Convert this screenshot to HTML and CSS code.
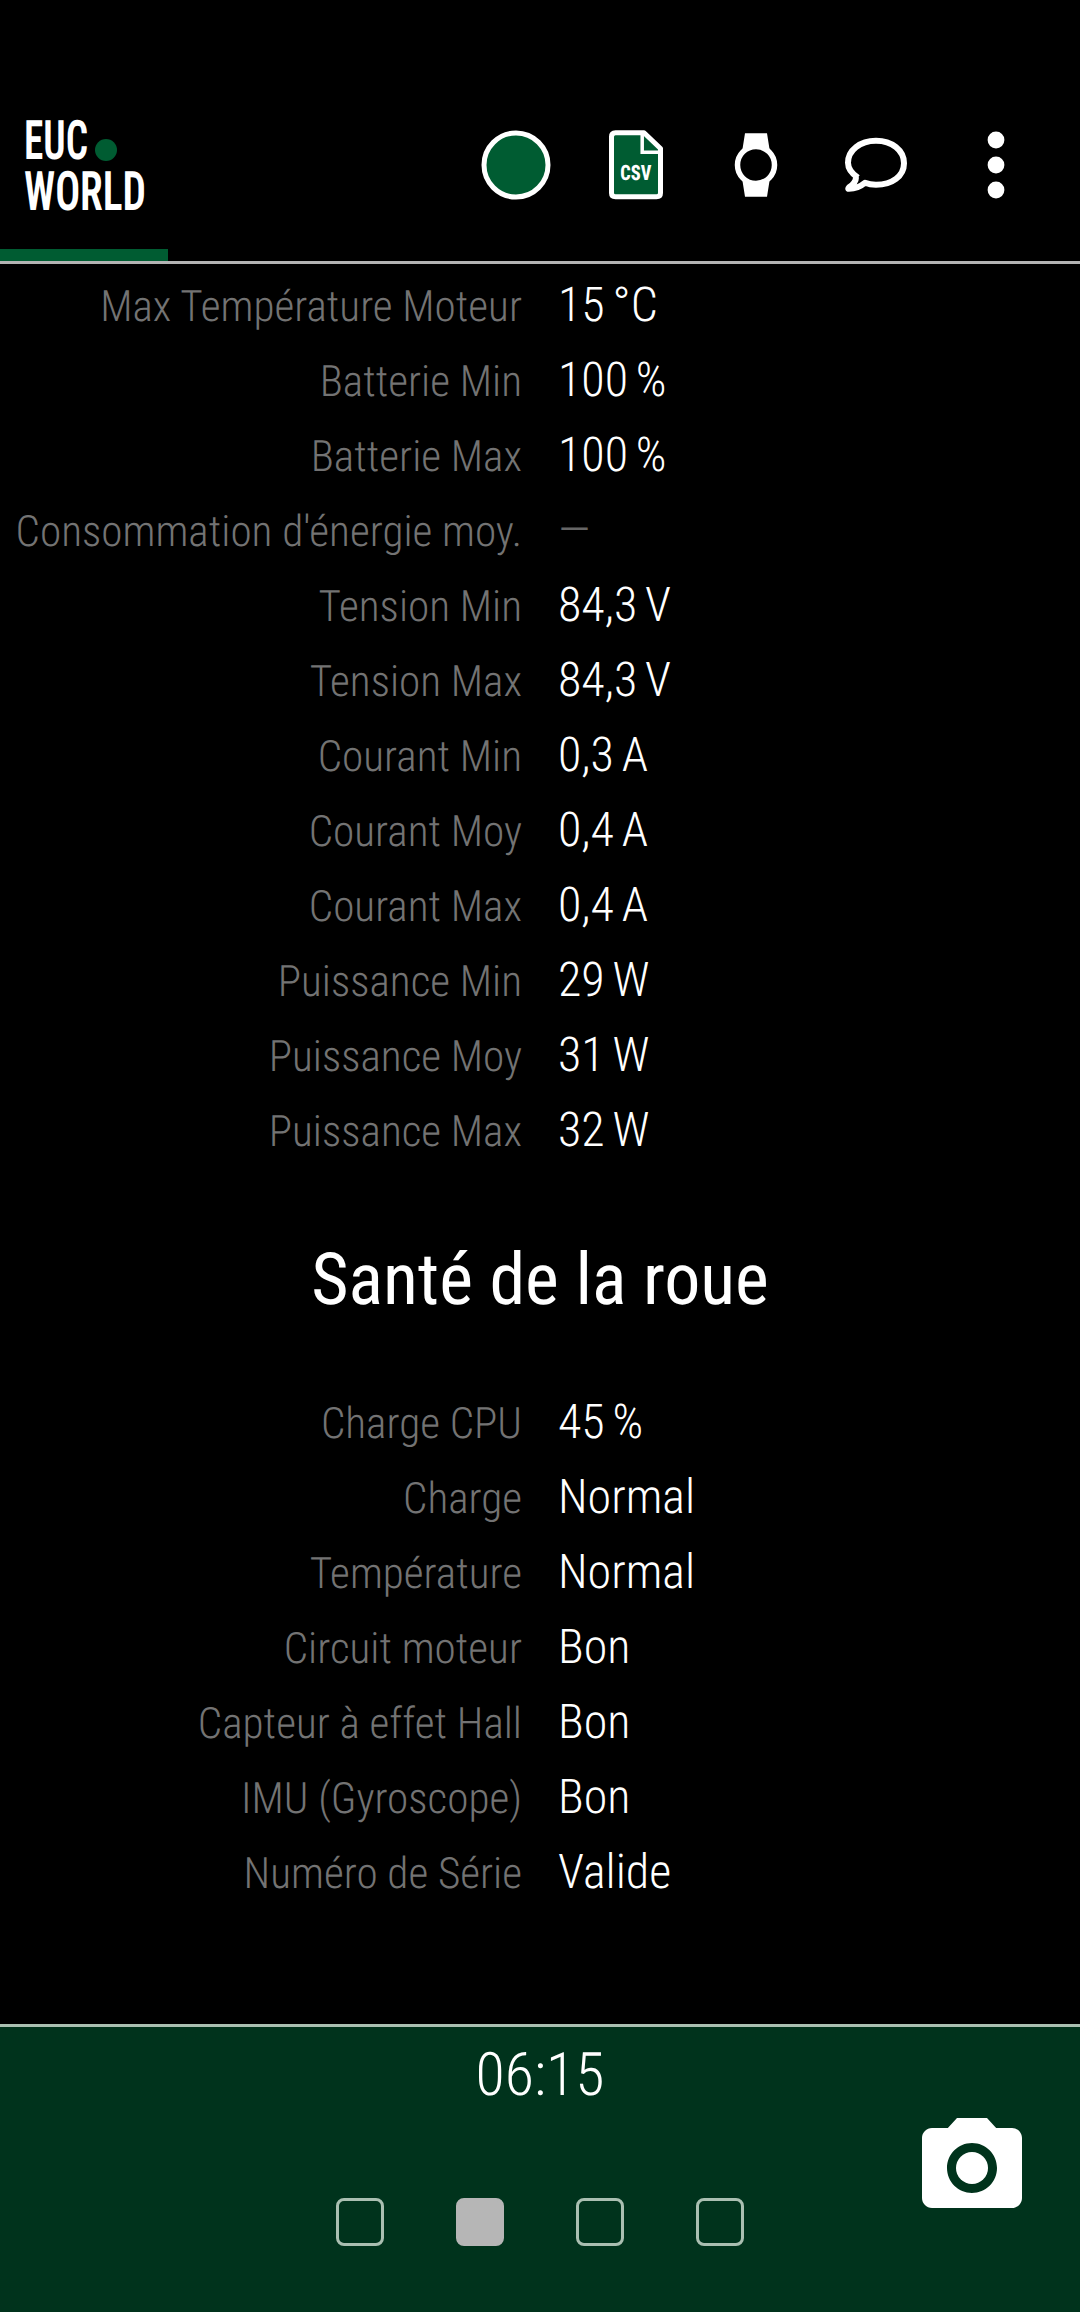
FILE: index.html
```html
<!DOCTYPE html>
<html lang="fr">
<head>
<meta charset="utf-8">
<title>EUC World</title>
<link rel="stylesheet" href="styles.css">
</head>
<body>
<header class="topbar">
  <div class="brand">
    <svg class="logo" viewBox="0 0 168 249" role="img" aria-label="EUC World">
      <text class="logo-text" x="24" y="159" textLength="64" lengthAdjust="spacingAndGlyphs">EUC</text>
      <text class="logo-text" x="24" y="209.500" textLength="122" lengthAdjust="spacingAndGlyphs">WORLD</text>
      <circle cx="106" cy="150" r="11" fill="#005c32"/>
    </svg>
    <div class="tab-indicator"></div>
  </div>
  <nav class="actions">
    <svg class="action" viewBox="0 0 120 120"><circle cx="60" cy="60" r="32" fill="#005c32" stroke="#fff" stroke-width="5"/></svg>
    <svg class="action" viewBox="0 0 120 120">
      <path d="M39.500 27.700H68L84.500 43.500V88Q84.500 91.700 80.500 91.700H39.500Q35.500 91.700 35.500 88V31.700Q35.500 27.700 39.500 27.700Z" fill="#005c32" stroke="#fff" stroke-width="5" stroke-linejoin="round"/>
      <path d="M66.200 28V47.200H84" fill="none" stroke="#fff" stroke-width="3.500"/>
      <text class="csv" x="44.300" y="74.800" textLength="31" lengthAdjust="spacingAndGlyphs">CSV</text>
    </svg>
    <svg class="action" viewBox="0 0 120 120">
      <path d="M49 28.300H71L73.500 44H46.500ZM46.500 76H73.500L71 91.700H49Z" fill="#fff"/>
      <circle cx="60" cy="60" r="18.500" fill="#000" stroke="#fff" stroke-width="5.500"/>
    </svg>
    <svg class="action" viewBox="0 0 120 120">
      <path d="M42 73C36 69 32 64 32 58C32 45.500 44 36 60 36S88 45.500 88 58.500S76 80 60 80Q54 80 49 78Q42 84 33 84Q31.500 84 33 82.500Q40 78 40 72.500" transform="translate(0 -.2)" fill="none" stroke="#fff" stroke-width="6" stroke-linejoin="round"/>
    </svg>
    <svg class="action" viewBox="0 0 120 120"><g fill="#fff"><circle cx="60" cy="35" r="8.400"/><circle cx="60" cy="60" r="8.400"/><circle cx="60" cy="85" r="8.400"/></g></svg>
  </nav>
</header>
<main class="content">
  <dl class="stats">
    <dt>Max Température Moteur</dt><dd>15 °C</dd>
    <dt>Batterie Min</dt><dd>100 %</dd>
    <dt>Batterie Max</dt><dd>100 %</dd>
    <dt>Consommation d'énergie moy.</dt><dd class="empty">—</dd>
    <dt>Tension Min</dt><dd>84,3 V</dd>
    <dt>Tension Max</dt><dd>84,3 V</dd>
    <dt>Courant Min</dt><dd>0,3 A</dd>
    <dt>Courant Moy</dt><dd>0,4 A</dd>
    <dt>Courant Max</dt><dd>0,4 A</dd>
    <dt>Puissance Min</dt><dd>29 W</dd>
    <dt>Puissance Moy</dt><dd>31 W</dd>
    <dt>Puissance Max</dt><dd>32 W</dd>
  </dl>
  <h1 class="section-title">Santé de la roue</h1>
  <dl class="stats">
    <dt>Charge CPU</dt><dd>45 %</dd>
    <dt>Charge</dt><dd>Normal</dd>
    <dt>Température</dt><dd>Normal</dd>
    <dt>Circuit moteur</dt><dd>Bon</dd>
    <dt>Capteur à effet Hall</dt><dd>Bon</dd>
    <dt>IMU (Gyroscope)</dt><dd>Bon</dd>
    <dt>Numéro de Série</dt><dd>Valide</dd>
  </dl>
</main>
<footer class="bottombar">
  <div class="center">
    <time class="clock">06:15</time>
    <div class="pages"><i class="page"></i><i class="page current"></i><i class="page"></i><i class="page"></i></div>
  </div>
  <svg class="camera" viewBox="0 0 24 24" fill="#fff"><circle cx="12" cy="12" r="3.200"/><path d="M9 2L7.170 4H4c-1.100 0-2 .9-2 2v12c0 1.100.9 2 2 2h16c1.100 0 2-.9 2-2V6c0-1.100-.9-2-2-2h-3.170L15 2H9zm3 15c-2.760 0-5-2.240-5-5s2.240-5 5-5 5 2.240 5 5-2.240 5-5 5z"/></svg>
</footer>
</body>
</html>
```
FILE: styles.css
```css
* { box-sizing: border-box; }
body {
  margin: 0;
  width: 1080px;
  height: 2312px;
  display: flex;
  flex-direction: column;
  background: #000;
  color: #fff;
  font-family: "Roboto Condensed", Roboto, sans-serif;
  font-stretch: 75%;
  font-weight: 300;
  text-rendering: geometricPrecision;
  overflow: hidden;
}
.topbar {
  height: 264px;
  flex: none;
  display: flex;
  justify-content: space-between;
  border-bottom: 3px solid #b3b3b3;
}
.brand { width: 168px; display: flex; flex-direction: column; }
.logo { width: 168px; height: 249px; }
.logo-text { font-size: 54.5px; font-weight: 600; fill: #fff; }
.tab-indicator { height: 12px; background: #005c32; }
.actions { display: flex; padding: 105px 24px 0 0; }
.action { width: 120px; height: 120px; }
.csv { font-size: 21px; font-weight: 800; fill: #fff; }
.content { flex: 1; padding-top: 3px; }
.stats {
  margin: 0;
  display: grid;
  grid-template-columns: 522px 1fr;
  column-gap: 36px;
  grid-auto-rows: 75px;
  align-items: baseline;
  white-space: nowrap;
}
.stats dt { text-align: right; font-size: 43.2px; line-height: 75px; color: #737373; }
.stats dd { margin: 0; font-size: 48px; line-height: 75px; word-spacing: -3px; }
.stats .empty { color: #666; }
.section-title {
  margin: 0;
  height: 217px;
  line-height: 225px;
  font-size: 72px;
  font-weight: 400;
  text-align: center;
}
.bottombar {
  height: 288px;
  flex: none;
  display: grid;
  grid-template-columns: 1fr 408px 1fr;
  border-top: 3px solid #aabfb1;
  background: #00331c;
}
.center { grid-column: 2; display: flex; flex-direction: column; align-items: center; }
.clock { font-size: 60px; line-height: 70px; padding-top: 13px; }
.pages { width: 408px; display: flex; justify-content: space-between; margin-top: 88px; }
.page { width: 48px; height: 48px; border: 3px solid #aabfb1; border-radius: 8px; }
.page.current { background: #b6b6b6; border-color: #b6b6b6; }
.camera { width: 120px; height: 120px; justify-self: end; margin: 81px 48px 0 0; }
```
